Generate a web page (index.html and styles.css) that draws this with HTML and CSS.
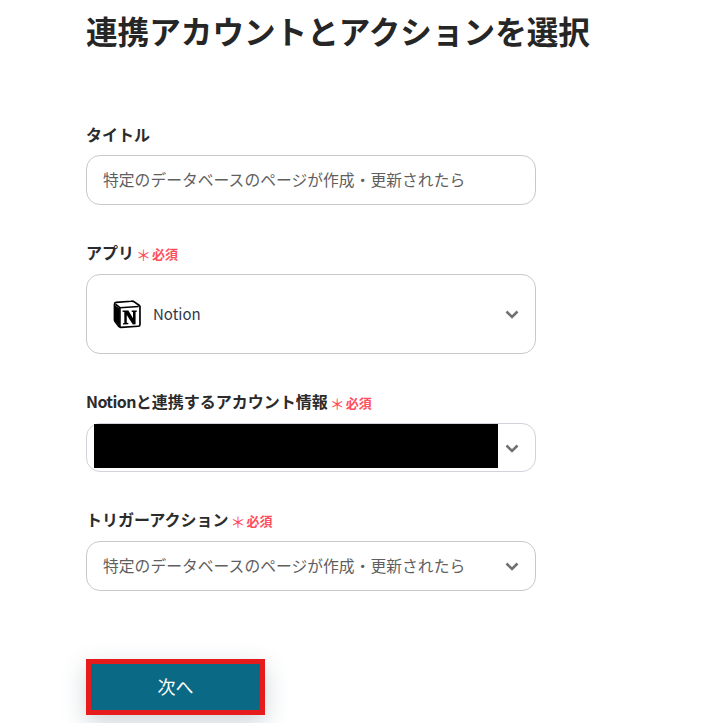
FILE: index.html
```html
<!DOCTYPE html>
<html lang="ja">
<head>
    <meta charset="UTF-8">
    <meta name="viewport" content="width=device-width, initial-scale=1.0">
    <title>連携アカウントとアクションを選択</title>
    <link rel="stylesheet" href="styles.css">
</head>
<body>

    <div class="container">
        <h1>連携アカウントとアクションを選択</h1>

        <div class="field field-first">
            <div class="field-label">タイトル</div>
            <div class="box box-input">特定のデータベースのページが作成・更新されたら</div>
        </div>

        <div class="field">
            <div class="field-label">アプリ<span class="required"><span class="mark">＊</span>必須</span></div>
            <div class="box box-app">
                <svg class="app-icon" viewBox="0 0 32 32" width="30" height="30">
                    <path d="M5.5 3.6 21.6 2.400c1.900-.2 2.400 0 3.600.9l4.700 3.400c.8.6 1 .8 1 1.400v19c0 1.200-.4 1.900-1.900 2l-18.300 1.100c-1.100.1-1.700-.1-2.300-.8l-3.700-4.800c-.7-.9-1-1.500-1-2.300V5.500c0-1 .4-1.800 1.800-1.900z" fill="#fff" stroke="#000" stroke-width="1.800" stroke-linejoin="round"/>
                    <path d="M4.800 5.600 9.500 9.300l20-1.300M9.500 9.300v20.500" fill="none" stroke="#000" stroke-width="1.800"/>
                    <path d="M3.500 6l5.500 4v19l-5-6z" fill="#000"/>
                    <path d="M12.300 12.200h6.200l5 8.200v-6.500l-1.500-.3v-1.400h5.500v1.400l-1.300.3v13l-2.900.2-6.500-10.100v8.200l1.700.4v1.400l-5.700.3v-1.400l1.400-.4V13.900l-1.900-.2z" fill="#000"/>
                </svg>
                <span class="app-name">Notion</span>
                <svg class="chevron" viewBox="0 0 14 9" width="14" height="9"><path d="M1.500 1.500 7 7l5.500-5.500" fill="none" stroke="#707070" stroke-width="2.600"/></svg>
            </div>
        </div>

        <div class="field">
            <div class="field-label"><span class="latin">Notion</span>と連携するアカウント情報<span class="required"><span class="mark">＊</span>必須</span></div>
            <div class="box box-account">
                <div class="redacted"></div>
                <svg class="chevron" viewBox="0 0 14 9" width="14" height="9"><path d="M1.500 1.500 7 7l5.500-5.500" fill="none" stroke="#707070" stroke-width="2.600"/></svg>
            </div>
        </div>

        <div class="field">
            <div class="field-label">トリガーアクション<span class="required"><span class="mark">＊</span>必須</span></div>
            <div class="box box-input">
                <span>特定のデータベースのページが作成・更新されたら</span>
                <svg class="chevron" viewBox="0 0 14 9" width="14" height="9"><path d="M1.500 1.500 7 7l5.500-5.500" fill="none" stroke="#707070" stroke-width="2.600"/></svg>
            </div>
        </div>

        <button type="button" class="next-btn">次へ</button>
    </div>

</body>
</html>
```

FILE: styles.css
```css
html, body {
    height: 723px;
    overflow: hidden;
}
body {
    font-family: "Noto Sans CJK JP", "Noto Sans", sans-serif;
    background-color: #fff;
    color: #2b2b2b;
    margin: 0;
    padding: 0;
}
.container {
    width: 450px;
    padding-left: 86px;
    padding-top: 7px;
}
h1 {
    font-size: 31.6px;
    line-height: 46px;
    font-weight: 700;
    margin: 0;
    color: #262626;
    white-space: nowrap;
}
.field {
    margin-top: 35px;
}
.field-first {
    margin-top: 69px;
}
.field-label {
    font-size: 16px;
    line-height: 24px;
    height: 24px;
    margin-bottom: 10px;
    font-weight: 700;
    display: flex;
    align-items: center;
    white-space: nowrap;
}
.field-first .field-label {
    margin-bottom: 9px;
}
.latin {
    letter-spacing: -0.6px;
}
.required {
    color: #ff4d5e;
    font-size: 13px;
    font-weight: 700;
    display: flex;
    align-items: center;
    padding-top: 3px;
}
.mark {
    font-size: 15px;
    line-height: 20px;
    font-weight: 400;
    margin-right: 1px;
    margin-left: 2px;
    padding-top: 3px;
}
.box {
    box-sizing: border-box;
    width: 450px;
    border: 1px solid #c9c9c9;
    border-radius: 14px;
    display: flex;
    align-items: center;
    background-color: #fff;
    position: relative;
}
.box-input {
    height: 50px;
    padding-left: 16px;
    padding-bottom: 2px;
    font-size: 15.8px;
    color: #5f5f5f;
    white-space: nowrap;
}
.box-app {
    height: 80px;
    padding-left: 24px;
}
.box-account {
    height: 49px;
    padding-left: 7px;
    border-color: #d0d3da;
}
.app-icon {
    flex-shrink: 0;
}
.app-name {
    font-size: 15px;
    margin-left: 12px;
    padding-bottom: 2px;
    color: #33384a;
}
.redacted {
    align-self: flex-start;
    width: 404px;
    height: 44px;
    background-color: #000;
}
.chevron {
    position: absolute;
    right: 16px;
    top: 50%;
    margin-top: -4px;
}
.next-btn {
    display: block;
    box-sizing: border-box;
    width: 179px;
    height: 56px;
    margin-top: 68px;
    padding-bottom: 3px;
    background-color: #0a6a85;
    border: 5px solid #e61c1c;
    color: #fff;
    font-family: inherit;
    font-size: 18px;
    box-shadow: 0 8px 24px rgba(30, 60, 80, 0.22);
}
```
